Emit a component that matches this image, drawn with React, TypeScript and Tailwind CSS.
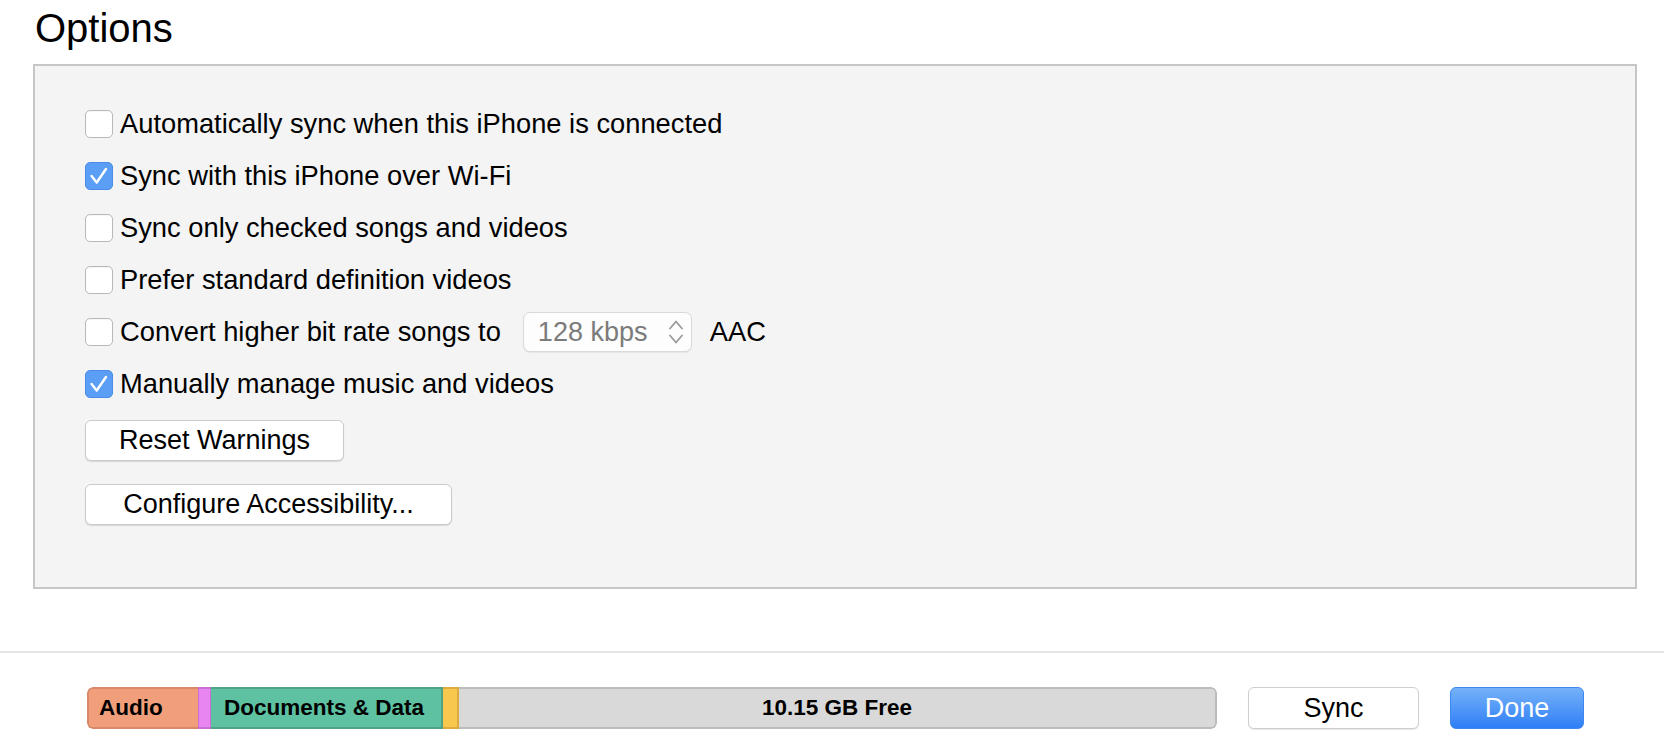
import React from 'react';

const FONT = { fontFamily: '"Liberation Sans", Arial, sans-serif' };

interface OptionRowProps {
  checked?: boolean;
  children: React.ReactNode;
}

const Checkbox: React.FC<{ checked?: boolean }> = ({ checked = false }) => {
  if (checked) {
    return (
      <span className="flex h-[28px] w-[28px] shrink-0 items-center justify-center rounded-[5px] border border-[#4a8ce8] bg-[#5a9ef5]">
        <svg width="28" height="28" viewBox="0 0 28 28" fill="none">
          <path d="M6 14l5.5 7L21.5 6.5" stroke="#fff" strokeWidth="2.6" strokeLinecap="round" strokeLinejoin="round" />
        </svg>
      </span>
    );
  }
  return (
    <span className="block h-[28px] w-[28px] shrink-0 rounded-[5px] border border-[#b8b8b8] bg-white shadow-[inset_0_1px_1px_rgba(0,0,0,0.04)]" />
  );
};

const OptionRow: React.FC<OptionRowProps> = ({ checked, children }) => (
  <div className="flex h-[52px] items-center">
    <Checkbox checked={checked} />
    <div className="ml-[7px] flex items-center text-[27.3px] leading-[52px] text-black">{children}</div>
  </div>
);

// Popup for the bit rate
const BitRateSelect: React.FC = () => (
  <div className="ml-[22px] mr-[18px] flex h-[40px] w-[169px] items-center justify-between rounded-[7px] border border-[#d9d9d9] bg-[#fdfdfd] pl-[14px] pr-[6px] shadow-[0_1px_1px_rgba(0,0,0,0.06)]">
    <span className="text-[27px] leading-none text-[#7b7b7b]">128 kbps</span>
    <svg width="18" height="26" viewBox="0 0 18 26" fill="none">
      <path d="M3 9.5L9 2.5l6 7" stroke="#9a9a9a" strokeWidth="1.8" strokeLinecap="round" strokeLinejoin="round" />
      <path d="M3 16.5L9 23.5l6-7" stroke="#9a9a9a" strokeWidth="1.8" strokeLinecap="round" strokeLinejoin="round" />
    </svg>
  </div>
);

const PushButton: React.FC<{ width: string; children: React.ReactNode }> = ({ width, children }) => (
  <button
    className={`flex h-[41px] items-center justify-center rounded-[6px] border border-[#cacaca] bg-white text-[27px] leading-none text-black shadow-[0_1px_1px_rgba(0,0,0,0.12)] ${width}`}
  >
    {children}
  </button>
);

export default function App() {
  return (
    <div className="flex h-[746px] w-[1664px] flex-col overflow-hidden bg-white" style={FONT}>
      {/* Title */}
      <div className="h-[64px] pl-[35px] pt-[8px]">
        <h1 className="text-[40px] leading-none font-normal text-black">Options</h1>
      </div>

      {/* Options panel */}
      <div className="ml-[33px] mr-[27px] h-[525px] border-2 border-[#c6c6c6] bg-[#f4f4f4] pl-[50px] pt-[32px]">
        <OptionRow>Automatically sync when this iPhone is connected</OptionRow>
        <OptionRow checked>Sync with this iPhone over Wi-Fi</OptionRow>
        <OptionRow>Sync only checked songs and videos</OptionRow>
        <OptionRow>Prefer standard definition videos</OptionRow>
        <OptionRow>
          <span>Convert higher bit rate songs to</span>
          <BitRateSelect />
          <span>AAC</span>
        </OptionRow>
        <OptionRow checked>Manually manage music and videos</OptionRow>

        <div className="mt-[10px] flex flex-col gap-[23px]">
          <PushButton width="w-[259px]">Reset Warnings</PushButton>
          <PushButton width="w-[367px]">Configure Accessibility...</PushButton>
        </div>
      </div>

      {/* Separator */}
      <div className="mt-[62px] h-[2px] w-full bg-[#e5e5e5]" />

      {/* Footer: storage bar + actions */}
      <div className="mt-[34px] flex items-center pl-[87px]">
        <div className="flex h-[42px] w-[1130px] overflow-hidden rounded-[6px] text-[22.5px] font-bold leading-none text-black">
          <div className="flex w-[111px] items-center rounded-l-[6px] border-2 border-r-0 border-[#d8896a] bg-[#f19f7b] pl-[10px]">
            Audio
          </div>
          <div className="w-[13px] border-y-2 border-x border-[#c86fd2] bg-[#e985f1]" />
          <div className="flex w-[232px] items-center border-y-2 border-r-2 border-[#4ea287] bg-[#5dc1a2] pl-[13px]">
            Documents &amp; Data
          </div>
          <div className="w-[16px] border-y-2 border-r-2 border-[#ddac3e] bg-[#f7c84d]" />
          <div className="flex flex-1 items-center justify-center rounded-r-[6px] border-2 border-l-0 border-[#bcbcbc] bg-[#d9d9d9]">
            10.15 GB Free
          </div>
        </div>

        <button className="ml-[31px] flex h-[42px] w-[171px] items-center justify-center rounded-[6px] border border-[#cfcfcf] bg-white text-[27px] leading-none text-black shadow-[0_1px_1px_rgba(0,0,0,0.1)]">
          Sync
        </button>
        <button className="ml-[31px] flex h-[42px] w-[134px] items-center justify-center rounded-[6px] border border-[#3d87ee] bg-gradient-to-b from-[#74b1f8] to-[#2e7ef6] text-[27px] leading-none text-white">
          Done
        </button>
      </div>
    </div>
  );
}
